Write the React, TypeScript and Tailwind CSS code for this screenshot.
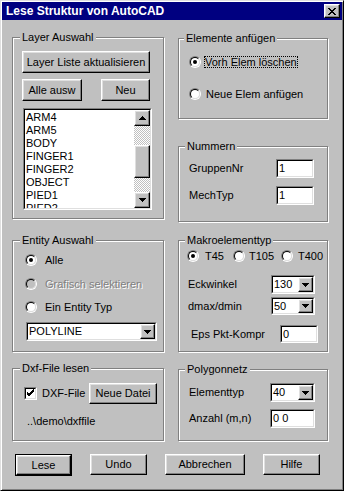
import React from "react"

const raised =
  "border border-t-white border-l-white border-r-black border-b-black shadow-[inset_-1px_-1px_0_#808080,inset_1px_1px_0_#dfdfdf] bg-[#c0c0c0]"

function Btn({ className = "", children }: { className?: string; children?: React.ReactNode }) {
  return (
    <button className={`${raised} flex items-center justify-center text-[11px] leading-[13px] text-black ${className}`}>
      {children}
    </button>
  )
}

function Sunken({ className = "", children }: { className?: string; children?: React.ReactNode }) {
  return (
    <div className={`border border-t-[#808080] border-l-[#808080] border-r-white border-b-white ${className}`}>
      <div className="h-full flex border border-t-black border-l-black border-r-[#dfdfdf] border-b-[#dfdfdf] bg-white overflow-hidden">
        {children}
      </div>
    </div>
  )
}

function Arrow({ up = false }: { up?: boolean }) {
  return (
    <svg width="7" height="4" viewBox="0 0 7 4" shapeRendering="crispEdges">
      <polygon points={up ? "3.5,0 7,4 0,4" : "0,0 7,0 3.5,4"} fill="#000" />
    </svg>
  )
}

function Combo({ value, className = "" }: { value: string; className?: string }) {
  return (
    <Sunken className={className}>
      <span className="flex-1 pl-[1px] text-[11px] leading-[15px] text-black">{value}</span>
      <div className={`${raised} w-[15px] h-full flex items-center justify-center`}>
        <Arrow />
      </div>
    </Sunken>
  )
}

function Field({ value, className = "" }: { value: string; className?: string }) {
  return (
    <Sunken className={className}>
      <span className="pl-[1px] text-[11px] leading-[15px] text-black">{value}</span>
    </Sunken>
  )
}

function Radio({ checked = false, disabled = false }: { checked?: boolean; disabled?: boolean }) {
  return (
    <div className="w-[12px] h-[12px] shrink-0 rounded-full border border-t-[#808080] border-l-[#808080] border-r-white border-b-white">
      <div
        className={`w-full h-full rounded-full border border-t-black border-l-black border-r-[#dfdfdf] border-b-[#dfdfdf] flex items-center justify-center ${
          disabled ? "bg-[#c0c0c0]" : "bg-white"
        }`}
      >
        {checked && <div className="w-[4px] h-[4px] rounded-full bg-black" />}
      </div>
    </div>
  )
}

function Group({
  label,
  labelPos,
  className,
  children,
}: {
  label: string
  labelPos: string
  className: string
  children?: React.ReactNode
}) {
  return (
    <div className={`relative border border-[#808080] shadow-[inset_1px_1px_0_#fff,1px_1px_0_#fff] ${className}`}>
      <span className={`absolute -top-[7px] ${labelPos} px-[2px] bg-[#c0c0c0] text-[11px] leading-[13px] text-black`}>
        {label}
      </span>
      {children}
    </div>
  )
}

const layers = ["ARM4", "ARM5", "BODY", "FINGER1", "FINGER2", "OBJECT", "PIED1", "PIED2"]

export default function App() {
  const xRows = [0, 1, 2, 3, 4, 5, 6]
  return (
    <div className="w-[344px] h-[491px] bg-[#c0c0c0] p-[1px] border border-t-[#dfdfdf] border-l-[#dfdfdf] border-r-black border-b-black shadow-[inset_1px_1px_0_#fff,inset_-1px_-1px_0_#808080] font-['Liberation_Sans',Arial,sans-serif] text-black overflow-hidden">
      {/* title bar */}
      <div className="h-[18px] bg-[#000080] flex items-center pl-[4px]">
        <span className="text-white font-bold text-[12px] leading-[14px]">Lese Struktur von AutoCAD</span>
        <div className={`${raised} ml-auto mr-[2px] w-[16px] h-[14px] flex items-center justify-center`}>
          <svg width="8" height="7" viewBox="0 0 8 7" shapeRendering="crispEdges">
            {xRows.map((y) => (
              <g key={y}>
                <rect x={y} y={y} width="2" height="1" fill="#000" />
                <rect x={6 - y} y={y} width="2" height="1" fill="#000" />
              </g>
            ))}
          </svg>
        </div>
      </div>

      <div className="flex pl-[10px] gap-[14px]">
        {/* left column */}
        <div className="flex flex-col w-[152px]">
          <Group label="Layer Auswahl" labelPos="left-[7px]" className="mt-[17px] h-[182px] pl-[9px] pt-[13px]">
            <Btn className="w-[128px] h-[22px]">Layer Liste aktualisieren</Btn>
            <div className="flex mt-[6px]">
              <Btn className="w-[60px] h-[22px]">Alle ausw</Btn>
              <Btn className="ml-[19px] w-[49px] h-[22px]">Neu</Btn>
            </div>
            <Sunken className="mt-[7px] ml-[1px] w-[129px] h-[102px]">
              <div className="flex-1 pl-[1px] pt-[1px]">
                {layers.map((l) => (
                  <div key={l} className="text-[11px] leading-[13px] text-black">
                    {l}
                  </div>
                ))}
              </div>
              <div className="w-[16px] h-full flex flex-col">
                <div className={`${raised} h-[16px] flex items-center justify-center`}>
                  <Arrow up />
                </div>
                <div className="flex-1 flex flex-col bg-[repeating-conic-gradient(#fff_0_25%,#c0c0c0_0_50%)] bg-[length:2px_2px]">
                  <div className={`${raised} mt-[19px] h-[33px]`} />
                </div>
                <div className={`${raised} h-[16px] flex items-center justify-center`}>
                  <Arrow />
                </div>
              </div>
            </Sunken>
          </Group>

          <Group label="Entity Auswahl" labelPos="left-[7px]" className="mt-[21px] h-[112px] pl-[12px] pt-[13px]">
            <div className="flex items-center gap-[8px] h-[12px]">
              <Radio checked />
              <span className="text-[11px] leading-[13px]">Alle</span>
            </div>
            <div className="flex items-center gap-[8px] h-[12px] mt-[12px]">
              <Radio disabled />
              <span className="text-[11px] leading-[13px] text-[#808080] [text-shadow:1px_1px_0_#fff]">
                Grafisch selektieren
              </span>
            </div>
            <div className="flex items-center gap-[8px] h-[12px] mt-[11px]">
              <Radio />
              <span className="text-[11px] leading-[13px]">Ein Entity Typ</span>
            </div>
            <Combo value="POLYLINE" className="mt-[9px] ml-[1px] w-[131px] h-[19px]" />
          </Group>

          <Group label="Dxf-File lesen" labelPos="left-[7px]" className="mt-[16px] h-[73px] pl-[11px] pt-[14px]">
            <div className="flex items-center h-[21px]">
              <Sunken className="w-[13px] h-[13px]">
                <svg width="9" height="9" viewBox="0 0 9 9" shapeRendering="crispEdges" className="m-auto">
                  <path d="M1 4 L3 6 L8 1 M1 5 L3 7 L8 2 M1 3 L3 5 L8 0" stroke="#000" strokeWidth="1" fill="none" />
                </svg>
              </Sunken>
              <span className="ml-[5px] w-[47px] text-[11px] leading-[13px]">DXF-File</span>
              <Btn className="w-[68px] h-[21px]">Neue Datei</Btn>
            </div>
            <div className="mt-[11px] ml-[3px] text-[11px] leading-[13px]">..\demo\dxffile</div>
          </Group>
        </div>

        {/* right column */}
        <div className="flex flex-col w-[150px]">
          <Group label="Elemente anfügen" labelPos="left-[5px]" className="mt-[18px] h-[81px] pl-[10px] pt-[17px]">
            <div className="flex items-center h-[12px]">
              <Radio checked />
              <span className="ml-[3px] border border-dotted border-black text-[11px] leading-[10px] py-[0px]">
                Vorh Elem löschen
              </span>
            </div>
            <div className="flex items-center h-[12px] mt-[20px]">
              <Radio />
              <span className="ml-[5px] text-[11px] leading-[13px]">Neue Elem anfügen</span>
            </div>
          </Group>

          <Group label="Nummern" labelPos="left-[6px]" className="mt-[27px] h-[76px] pl-[10px] pt-[12px]">
            <div className="flex items-center">
              <span className="w-[87px] text-[11px] leading-[13px]">GruppenNr</span>
              <Field value="1" className="w-[38px] h-[19px]" />
            </div>
            <div className="flex items-center mt-[8px]">
              <span className="w-[87px] text-[11px] leading-[13px]">MechTyp</span>
              <Field value="1" className="w-[38px] h-[19px]" />
            </div>
          </Group>

          <Group label="Makroelementtyp" labelPos="left-[6px]" className="mt-[18px] h-[112px] pl-[8px] pt-[9px]">
            <div className="flex h-[12px]">
              <div className="flex items-center gap-[6px] w-[46px]">
                <Radio checked />
                <span className="text-[11px] leading-[13px]">T45</span>
              </div>
              <div className="flex items-center gap-[4px] w-[48px]">
                <Radio />
                <span className="text-[11px] leading-[13px]">T105</span>
              </div>
              <div className="flex items-center gap-[5px]">
                <Radio />
                <span className="text-[11px] leading-[13px]">T400</span>
              </div>
            </div>
            <div className="flex items-center mt-[13px] ml-[1px]">
              <span className="w-[83px] text-[11px] leading-[13px]">Eckwinkel</span>
              <Combo value="130" className="w-[44px] h-[19px]" />
            </div>
            <div className="flex items-center mt-[3px] ml-[1px]">
              <span className="w-[83px] text-[11px] leading-[13px]">dmax/dmin</span>
              <Combo value="50" className="w-[44px] h-[18px]" />
            </div>
            <div className="flex items-center mt-[10px] ml-[4px]">
              <span className="w-[89px] text-[11px] leading-[13px]">Eps Pkt-Kompr</span>
              <Field value="0" className="w-[38px] h-[18px]" />
            </div>
          </Group>

          <Group label="Polygonnetz" labelPos="left-[6px]" className="mt-[17px] h-[72px] pl-[10px] pt-[13px]">
            <div className="flex items-center">
              <span className="w-[81px] text-[11px] leading-[13px]">Elementtyp</span>
              <Combo value="40" className="w-[45px] h-[19px]" />
            </div>
            <div className="flex items-center mt-[7px]">
              <span className="w-[81px] text-[11px] leading-[13px]">Anzahl (m,n)</span>
              <Field value="0 0" className="w-[45px] h-[19px]" />
            </div>
          </Group>
        </div>
      </div>

      {/* bottom buttons */}
      <div className="flex mt-[13px] pl-[13px] gap-[18px]">
        <div className="border border-black w-[57px] h-[22px] flex">
          <Btn className="flex-1">Lese</Btn>
        </div>
        <Btn className="w-[57px] h-[21px]">Undo</Btn>
        <Btn className="w-[80px] h-[21px]">Abbrechen</Btn>
        <Btn className="w-[57px] h-[21px]">Hilfe</Btn>
      </div>
    </div>
  )
}
